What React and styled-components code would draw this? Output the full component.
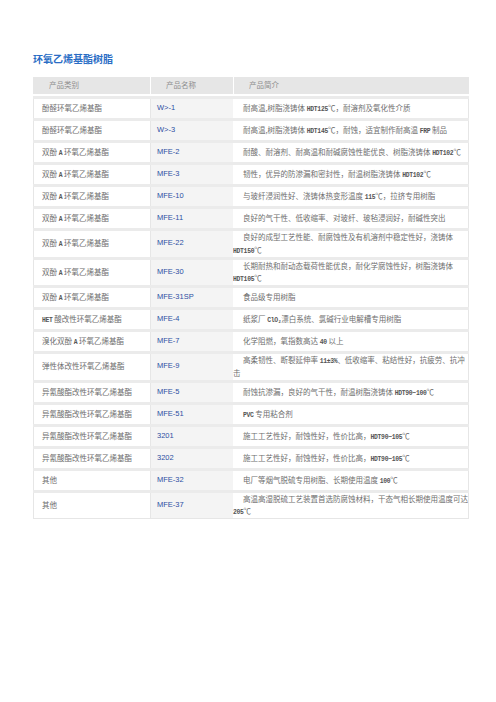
import styled, { createGlobalStyle } from 'styled-components';

const GlobalStyle = createGlobalStyle`
  html, body {
    margin: 0;
    background: #ffffff;
  }
  body {
    font-family: "Noto Sans CJK SC", sans-serif;
  }
`;

const Page = styled.div`
  width: 496px;
  min-height: 702px;
  box-sizing: border-box;
  padding: 52px 27px 0 33px;
`;

const Title = styled.h1`
  margin: 0 0 12px;
  font-size: 10px;
  line-height: 13px;
  font-weight: 700;
  color: #2a6dc5;
`;

const Table = styled.div`
  width: 436px;
  font-size: 7.5px;
  line-height: 12.75px;
  color: #6e6e6e;
  border-bottom: 1px solid #e6e6e6;
`;

const Row = styled.div`
  display: grid;
  grid-template-columns: 117px 83px 236px;
  min-height: 19px;
  border-top: ${props => (props.$head ? '0' : '3px solid #ebebeb')};
`;

const HeadCell = styled.div`
  height: 17px;
  display: flex;
  align-items: center;
  padding-left: ${props => props.$pad}px;
  background: #e6e6e6;
  color: #8e8e8e;
  border-left: ${props => (props.$first ? '0' : '1px solid #ffffff')};
`;

const TypeCell = styled.div`
  display: flex;
  align-items: center;
  padding-left: 8px;
  border-left: 1px solid #e6e6e6;
  white-space: nowrap;
`;

const NameCell = styled.div`
  display: flex;
  align-items: center;
  padding-left: 6px;
  background: #f4f4f4;
  border-left: 1px solid #e6e6e6;
  font-family: "Liberation Sans", Arial, sans-serif;
  color: #2c4fa3;
`;

const DescCell = styled.div`
  display: flex;
  flex-direction: column;
  justify-content: center;
  border-right: 1px solid #e6e6e6;
  white-space: nowrap;
  overflow: hidden;
`;

const Line = styled.div`
  height: 12.75px;
  padding-left: ${props => (props.$indent ? '10px' : '0')};
`;

const Latin = styled.span`
  font-family: "Liberation Mono", monospace;
  font-weight: 700;
  font-size: 6.4px;
  line-height: 0;
  letter-spacing: -0.3px;
  color: #555555;
`;

const products = [
  { type: '酚醛环氧乙烯基酯', name: 'W>-1', desc: ['耐高温,树脂浇铸体 HDT125℃，耐溶剂及氧化性介质'] },
  { type: '酚醛环氧乙烯基酯', name: 'W>-3', desc: ['耐高温,树脂浇铸体 HDT145℃，耐蚀，适宜制作耐高温 FRP 制品'] },
  { type: '双酚 A 环氧乙烯基酯', name: 'MFE-2', desc: ['耐酸、耐溶剂、耐高温和耐碱腐蚀性能优良、树脂浇铸体 HDT102℃'] },
  { type: '双酚 A 环氧乙烯基酯', name: 'MFE-3', desc: ['韧性，优异的防渗漏和密封性，耐温树脂浇铸体 HDT102℃'] },
  { type: '双酚 A 环氧乙烯基酯', name: 'MFE-10', desc: ['与玻纤浸润性好、浇铸体热变形温度 115℃，拉挤专用树脂'] },
  { type: '双酚 A 环氧乙烯基酯', name: 'MFE-11', desc: ['良好的气干性、低收缩率、对玻纤、玻毡浸润好，耐碱性突出'] },
  { type: '双酚 A 环氧乙烯基酯', name: 'MFE-22', desc: ['良好的成型工艺性能、耐腐蚀性及有机溶剂中稳定性好，浇铸体', 'HDT150℃'] },
  { type: '双酚 A 环氧乙烯基酯', name: 'MFE-30', desc: ['长期耐热和耐动态载荷性能优良，耐化学腐蚀性好，树脂浇铸体', 'HDT105℃'] },
  { type: '双酚 A 环氧乙烯基酯', name: 'MFE-31SP', desc: ['食品级专用树脂'] },
  { type: 'HET 酸改性环氧乙烯基酯', name: 'MFE-4', desc: ['纸浆厂 ClO₂漂白系统、氯碱行业电解槽专用树脂'] },
  { type: '溴化双酚 A 环氧乙烯基酯', name: 'MFE-7', desc: ['化学阻燃，氧指数高达 40 以上'] },
  { type: '弹性体改性环氧乙烯基酯', name: 'MFE-9', desc: ['高柔韧性、断裂延伸率 11±3%、低收缩率、粘结性好，抗疲劳、抗冲', '击'] },
  { type: '异氰酸酯改性环氧乙烯基酯', name: 'MFE-5', desc: ['耐蚀抗渗漏，良好的气干性，耐温树脂浇铸体 HDT90~100℃'] },
  { type: '异氰酸酯改性环氧乙烯基酯', name: 'MFE-51', desc: ['PVC 专用粘合剂'] },
  { type: '异氰酸酯改性环氧乙烯基酯', name: '3201', desc: ['施工工艺性好，耐蚀性好，性价比高，HDT90~105℃'] },
  { type: '异氰酸酯改性环氧乙烯基酯', name: '3202', desc: ['施工工艺性好，耐蚀性好，性价比高，HDT90~105℃'] },
  { type: '其他', name: 'MFE-32', desc: ['电厂等烟气脱硫专用树脂、长期使用温度 100℃'] },
  { type: '其他', name: 'MFE-37', desc: ['高温高湿脱硫工艺装置首选防腐蚀材料，干态气相长期使用温度可达', '205℃'] },
];

// half-width runs (HDT125, FRP, 40 ...) are set in a bold mono face like the source
function withLatin(text) {
  return text.split(/([A-Za-z0-9±%~₂]+)/).map((part, index) =>
    index % 2 === 1 ? <Latin key={index}>{part}</Latin> : part
  );
}

function App() {
  return (
    <>
      <GlobalStyle />
      <Page>
        <Title>环氧乙烯基酯树脂</Title>
        <Table>
          <Row $head>
            <HeadCell $first $pad={16}>产品类别</HeadCell>
            <HeadCell $pad={15}>产品名称</HeadCell>
            <HeadCell $pad={15}>产品简介</HeadCell>
          </Row>
          {products.map((item, index) => (
            <Row key={index}>
              <TypeCell>
                <span>{withLatin(item.type)}</span>
              </TypeCell>
              <NameCell>{item.name}</NameCell>
              <DescCell>
                {item.desc.map((line, i) => (
                  <Line key={i} $indent={i === 0}>
                    {withLatin(line)}
                  </Line>
                ))}
              </DescCell>
            </Row>
          ))}
        </Table>
      </Page>
    </>
  );
}

export default App;
